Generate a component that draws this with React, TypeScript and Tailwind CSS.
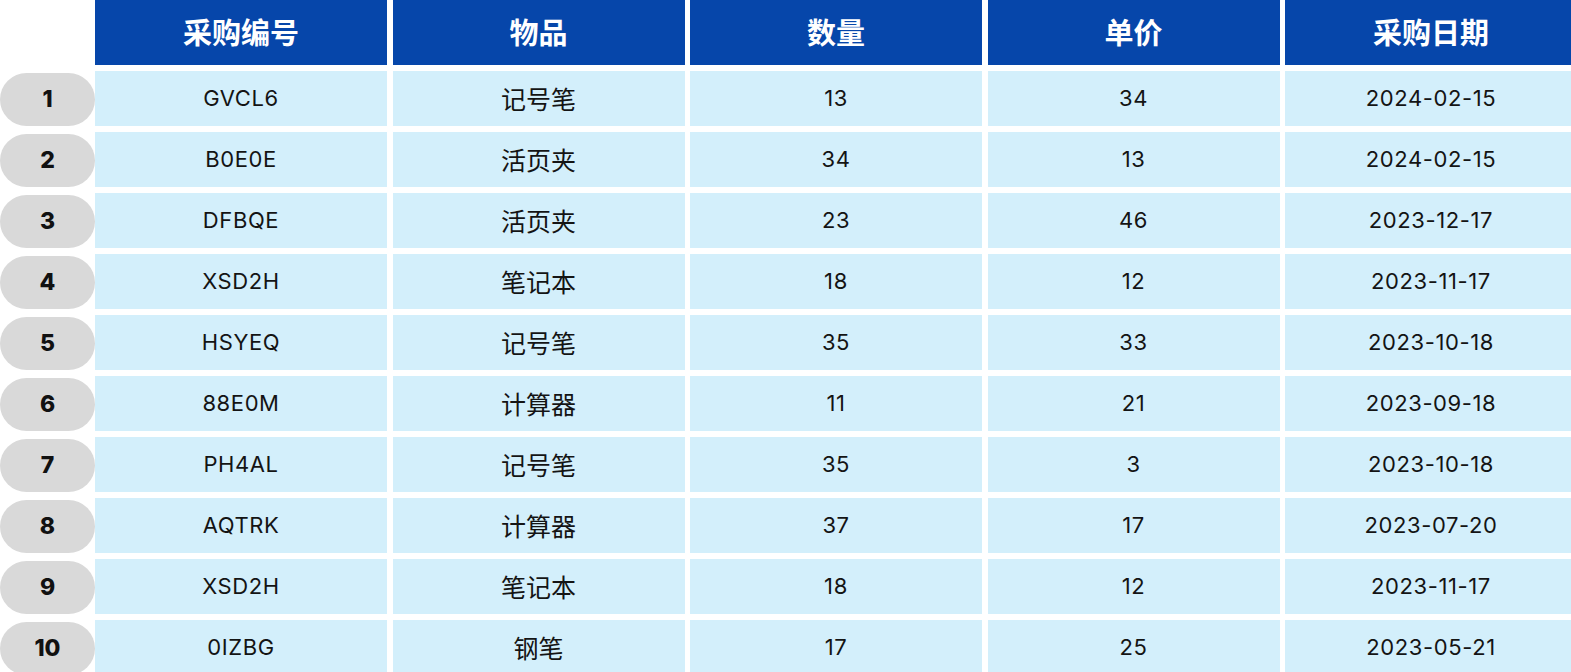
import React from 'react';

interface PurchaseRow {
  code: string;
  item: string;
  qty: number;
  price: number;
  date: string;
}

const headers = ['采购编号', '物品', '数量', '单价', '采购日期'];

const rows: PurchaseRow[] = [
  { code: 'GVCL6', item: '记号笔', qty: 13, price: 34, date: '2024-02-15' },
  { code: 'B0E0E', item: '活页夹', qty: 34, price: 13, date: '2024-02-15' },
  { code: 'DFBQE', item: '活页夹', qty: 23, price: 46, date: '2023-12-17' },
  { code: 'XSD2H', item: '笔记本', qty: 18, price: 12, date: '2023-11-17' },
  { code: 'HSYEQ', item: '记号笔', qty: 35, price: 33, date: '2023-10-18' },
  { code: '88E0M', item: '计算器', qty: 11, price: 21, date: '2023-09-18' },
  { code: 'PH4AL', item: '记号笔', qty: 35, price: 3, date: '2023-10-18' },
  { code: 'AQTRK', item: '计算器', qty: 37, price: 17, date: '2023-07-20' },
  { code: 'XSD2H', item: '笔记本', qty: 18, price: 12, date: '2023-11-17' },
  { code: '0IZBG', item: '钢笔', qty: 17, price: 25, date: '2023-05-21' },
];

const latin = "font-['Inter','Noto_Sans_CJK_SC',sans-serif]";
const cjk = "font-['Noto_Sans_CJK_SC',sans-serif]";

const Cell = ({ children, className = '' }: { children: React.ReactNode; className?: string }) => (
  <div className={`flex h-[55px] w-[292px] shrink-0 items-center justify-center bg-[#d3effb] text-[#141414] ${className}`}>
    {children}
  </div>
);

export default function App() {
  return (
    <div className="h-[672px] w-[1571px] overflow-hidden bg-white">
      <div className="flex flex-col gap-[6px]">
        {/* header */}
        <div className="flex h-[65px]">
          <div className="w-[95px] shrink-0" />
          <div className="flex gap-[5.5px]">
            {headers.map((h) => (
              <div
                key={h}
                className={`flex h-[65px] w-[292px] shrink-0 items-center justify-center bg-[#0646aa] pb-[1px] text-[29px] font-bold text-white ${cjk}`}
              >
                {h}
              </div>
            ))}
          </div>
        </div>

        {rows.map((r, i) => (
          <div key={i} className="flex h-[55px] items-center">
            <div
              className={`flex h-[53px] w-[95px] shrink-0 items-center justify-center self-end rounded-full bg-[#d9d9d9] text-[23px] font-extrabold text-[#111] ${latin}`}
            >
              {i + 1}
            </div>
            <div className="flex gap-[5.5px]">
              <Cell className={`text-[22px] tracking-[0.6px] ${latin}`}>{r.code}</Cell>
              <Cell className={`text-[25px] ${cjk}`}>{r.item}</Cell>
              <Cell className={`text-[22px] tracking-[0.6px] ${latin}`}>{r.qty}</Cell>
              <Cell className={`text-[22px] tracking-[0.6px] ${latin}`}>{r.price}</Cell>
              <Cell className={`text-[22px] tracking-[0.6px] ${latin}`}>{r.date}</Cell>
            </div>
          </div>
        ))}
      </div>
    </div>
  );
}
